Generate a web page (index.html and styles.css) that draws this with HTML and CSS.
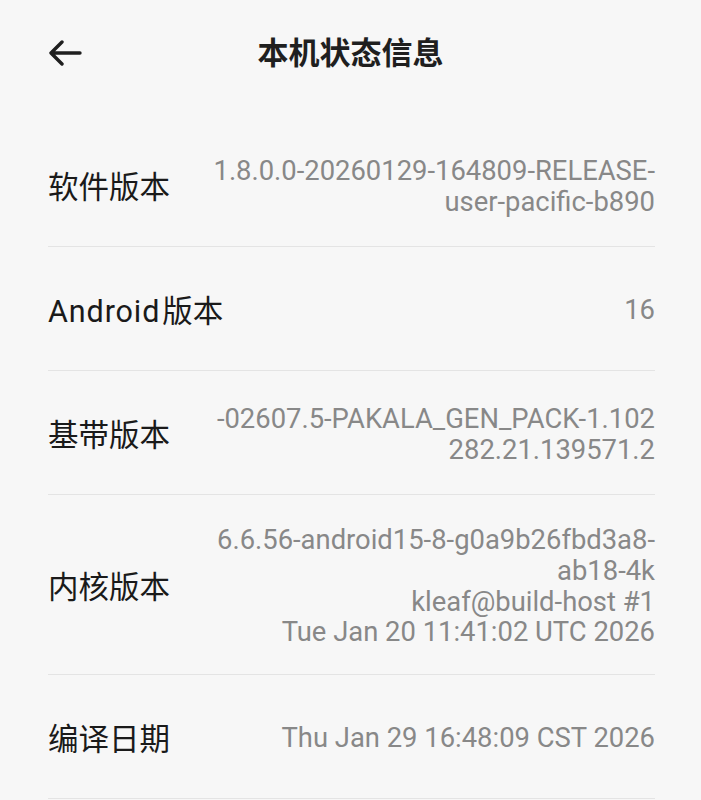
FILE: index.html
```html
<!DOCTYPE html>
<html lang="zh-CN">
<head>
  <meta charset="UTF-8" />
  <meta name="viewport" content="width=device-width, initial-scale=1.0" />
  <title>本机状态信息</title>
  <link rel="stylesheet" href="styles.css">
</head>
<body>

<header class="topbar">
  <button class="back" aria-label="返回">
    <svg width="34" height="26" viewBox="0 0 34 26">
      <path d="M32 13H4M14 2L3 13l11 11" fill="none" stroke="#1f1f1f" stroke-width="3.4" stroke-linecap="round" stroke-linejoin="round"/>
    </svg>
  </button>
  <h1>本机状态信息</h1>
</header>

<main class="list">
  <div class="row">
    <div class="label">软件版本</div>
    <div class="value">1.8.0.0-20260129-164809-RELEASE-<br>user-pacific-b890</div>
  </div>
  <div class="row">
    <div class="label"><span class="latin">Android</span>版本</div>
    <div class="value">16</div>
  </div>
  <div class="row">
    <div class="label">基带版本</div>
    <div class="value">-02607.5-PAKALA_GEN_PACK-1.102<br>282.21.139571.2</div>
  </div>
  <div class="row">
    <div class="label">内核版本</div>
    <div class="value">6.6.56-android15-8-g0a9b26fbd3a8-<br>ab18-4k<br>kleaf@build-host #1<br>Tue Jan 20 11:41:02 UTC 2026</div>
  </div>
  <div class="row">
    <div class="label">编译日期</div>
    <div class="value">Thu Jan 29 16:48:09 CST 2026</div>
  </div>
</main>

</body>
</html>
```

FILE: styles.css
```css
*       { box-sizing:border-box; margin:0; padding:0; }
body    { font-family:Roboto,"Noto Sans CJK SC",sans-serif; background:#f7f7f7; color:#1a1a1a; }

/* top bar */
.topbar { position:relative; height:123px; padding:32px 48px 0; }
.back   { position:absolute; left:48px; top:40px; border:none; background:none; display:flex; }
.topbar h1 { text-align:center; font-size:31px; line-height:44px; font-weight:700; color:#1f1f1f; }

/* rows */
.list   { padding:0 46px 0 48px; }
.row    { display:flex; align-items:center; justify-content:space-between; gap:24px;
          min-height:124px; padding:26px 0; border-bottom:1.5px solid #e4e4e4; }
.label  { font-size:30.5px; white-space:nowrap; color:#1a1a1a; }
.label .latin { letter-spacing:.9px; margin-right:2px; }
.value  { font-size:27.4px; line-height:30.8px; color:#888; text-align:right; margin-top:4px; }
```
